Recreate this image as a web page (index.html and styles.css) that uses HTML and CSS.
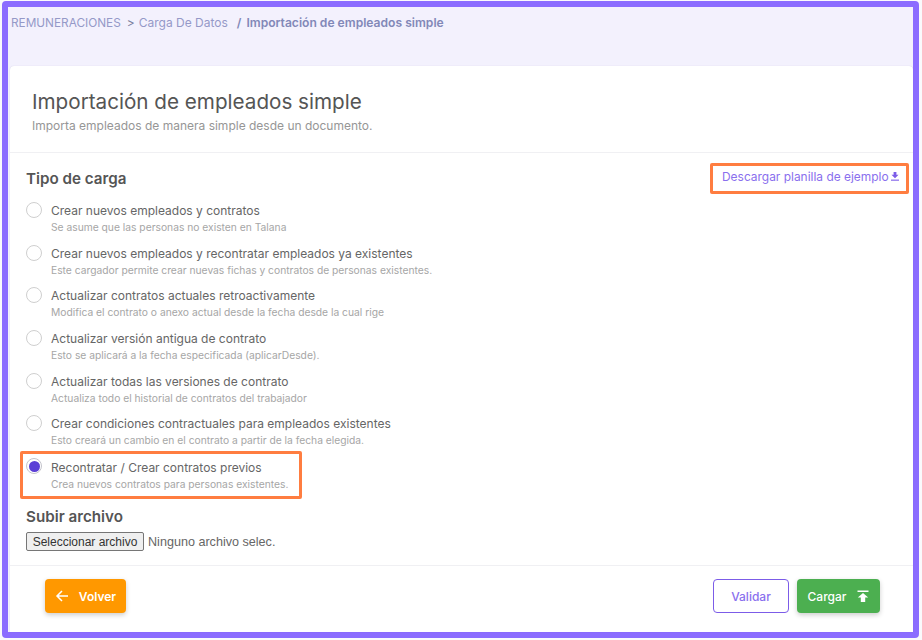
FILE: index.html
```html
<!DOCTYPE html>
<html lang="es">
<head>
    <meta charset="UTF-8">
    <title>Importación de empleados simple</title>
    <link rel="stylesheet" href="styles.css">
</head>
<body>
    <div class="frame">
        <div class="breadcrumb">
            <span class="root">REMUNERACIONES</span><span class="sep">&gt;</span><span>Carga De Datos</span><b class="current"><span class="slash">/</span>Importación de empleados simple</b>
        </div>

        <div class="card">
            <div class="card-header">
                <h1>Importación de empleados simple</h1>
                <p>Importa empleados de manera simple desde un documento.</p>
            </div>

            <div class="card-body">
                <div class="type-head">
                    <h2>Tipo de carga</h2>
                    <a href="#" class="download">Descargar planilla de ejemplo
                        <svg class="download-icon" width="8" height="9" viewBox="0 0 8 9"><path d="M2.6 0h2.8v2.8h2.1L4 6.2 0.5 2.8h2.1z" fill="#7c5ce8"/><rect x="0" y="7.6" width="8" height="1.1" fill="#7c5ce8"/></svg>
                    </a>
                </div>

                <div class="option">
                    <span class="radio"></span>
                    <div><div class="opt-title">Crear nuevos empleados y contratos</div><div class="opt-sub">Se asume que las personas no existen en Talana</div></div>
                </div>
                <div class="option">
                    <span class="radio"></span>
                    <div><div class="opt-title">Crear nuevos empleados y recontratar empleados ya existentes</div><div class="opt-sub">Este cargador permite crear nuevas fichas y contratos de personas existentes.</div></div>
                </div>
                <div class="option">
                    <span class="radio"></span>
                    <div><div class="opt-title">Actualizar contratos actuales retroactivamente</div><div class="opt-sub">Modifica el contrato o anexo actual desde la fecha desde la cual rige</div></div>
                </div>
                <div class="option">
                    <span class="radio"></span>
                    <div><div class="opt-title">Actualizar versión antigua de contrato</div><div class="opt-sub">Esto se aplicará a la fecha especificada (aplicarDesde).</div></div>
                </div>
                <div class="option">
                    <span class="radio"></span>
                    <div><div class="opt-title">Actualizar todas las versiones de contrato</div><div class="opt-sub">Actualiza todo el historial de contratos del trabajador</div></div>
                </div>
                <div class="option">
                    <span class="radio"></span>
                    <div><div class="opt-title">Crear condiciones contractuales para empleados existentes</div><div class="opt-sub">Esto creará un cambio en el contrato a partir de la fecha elegida.</div></div>
                </div>
                <div class="option selected">
                    <span class="radio checked"></span>
                    <div><div class="opt-title">Recontratar / Crear contratos previos</div><div class="opt-sub">Crea nuevos contratos para personas existentes.</div></div>
                </div>

                <h2 class="upload-title">Subir archivo</h2>
                <div class="file-row">
                    <button type="button" class="file-btn">Seleccionar archivo</button>
                    <span>Ninguno archivo selec.</span>
                </div>
            </div>

            <div class="card-footer">
                <button type="button" class="btn btn-back">
                    <svg width="14" height="14" viewBox="0 0 14 14"><path d="M13 7H2M7 2 2 7l5 5" fill="none" stroke="#fff" stroke-width="1.5"/></svg>
                    Volver
                </button>
                <div class="actions">
                    <button type="button" class="btn btn-validate">Validar</button>
                    <button type="button" class="btn btn-load">Cargar
                        <svg width="12" height="12" viewBox="0 0 12 12"><rect x="0.5" y="0.5" width="11" height="1.5" fill="#fff"/><path d="M6 3 11.2 7.6H8.2V12H3.8V7.6H0.8z" fill="#fff"/></svg>
                    </button>
                </div>
            </div>
        </div>
    </div>
</body>
</html>
```
FILE: styles.css
```css
* {
    box-sizing: border-box;
}

html, body {
    margin: 0;
    padding: 0;
    height: 640px;
    overflow: hidden;
}

body {
    background: #fafafc;
    font-family: Inter, Arial, sans-serif;
    color: #666;
    padding: 1px 3px 2px 2px;
}

.frame {
    height: 637px;
    border: 6px solid #8b6cff;
    border-radius: 4px;
    background: #f3f1fd;
    padding-left: 2px;
    display: flex;
    flex-direction: column;
}

.breadcrumb {
    height: 59px;
    padding: 8px 0 0 1px;
    font-size: 12px;
    line-height: 15px;
    color: #9599c8;
}

.breadcrumb .root {
    font-size: 11.8px;
}

.breadcrumb .sep {
    margin: 0 4px 0 6px;
    color: #7b7f9e;
}

.current {
    color: #8288b8;
    font-size: 12.1px;
    font-weight: 600;
    margin-left: 9px;
}

.current .slash {
    margin-right: 5px;
}

.card {
    flex: 1;
    background: #fff;
    border-radius: 4px 4px 0 0;
    box-shadow: 0 0 1px rgba(80, 70, 140, 0.25);
    display: flex;
    flex-direction: column;
}

.card-header {
    height: 87px;
    padding: 24px 22px 0;
    border-bottom: 1px solid #f0f0f3;
}

.card-header h1 {
    margin: 0;
    font-size: 20.65px;
    line-height: 24px;
    font-weight: 400;
    color: #555;
}

.card-header p {
    margin: 5px 0 0;
    font-size: 12px;
    line-height: 14px;
    color: #969696;
}

.card-body {
    flex: 1;
    padding: 0 4px 0 16px;
}

.type-head {
    display: flex;
    justify-content: space-between;
    align-items: flex-start;
    height: 48px;
    padding-top: 10px;
}

h2 {
    margin: 0;
    font-size: 15.2px;
    line-height: 32px;
    font-weight: 600;
    color: #555;
}

.download {
    display: block;
    width: 199px;
    height: 31px;
    border: 3px solid #ff7d40;
    border-radius: 2px;
    padding: 2px 0 0 9px;
    font-size: 11.95px;
    line-height: 17px;
    color: #8a70ee;
    text-decoration: none;
    white-space: nowrap;
}

.download-icon {
    margin-left: -1px;
}

.option {
    display: flex;
    gap: 9px;
    height: 42.7px;
}

.radio {
    flex: none;
    width: 16px;
    height: 16px;
    margin-top: 1px;
    border: 1.5px solid #cfcfcf;
    border-radius: 50%;
    background: #fff;
}

.radio.checked {
    border-color: #c4c4cc;
    padding: 1.5px;
    background: #5b3fd6 content-box;
}

.opt-title {
    font-size: 12px;
    line-height: 19px;
    color: #666;
    white-space: nowrap;
}

.opt-sub {
    font-size: 10.27px;
    line-height: 13px;
    margin-top: 1px;
    color: #a6a6a6;
    white-space: nowrap;
}

.option.selected {
    width: 282px;
    height: 48px;
    margin: -5.7px 0 0 -6px;
    padding: 4px 0 0 3px;
    border: 3px solid #ff7d40;
    border-radius: 2px;
}

.option.selected .radio {
    margin-top: 0;
}

.upload-title {
    line-height: 18px;
    margin-top: 9px;
}

.file-row {
    display: flex;
    align-items: center;
    gap: 4px;
    margin-top: 6px;
    font-family: "Liberation Sans", Arial, sans-serif;
    font-size: 12.6px;
    color: #666;
}

.file-btn {
    width: 118px;
    height: 19px;
    padding: 0;
    border: 1px solid #767676;
    border-radius: 2px;
    background: #efefef;
    font-family: "Liberation Sans", Arial, sans-serif;
    font-size: 12px;
    color: #333;
}

.card-footer {
    height: 67px;
    padding: 13px 33px 0 35px;
    border-top: 1px solid #f0f0f3;
    display: flex;
    justify-content: space-between;
    align-items: flex-start;
}

.actions {
    display: flex;
    gap: 8px;
}

.btn {
    height: 34px;
    border: none;
    border-radius: 4px;
    font-family: Inter, Arial, sans-serif;
    font-size: 12px;
    font-weight: 500;
    color: #fff;
    display: flex;
    align-items: center;
    justify-content: center;
    box-shadow: 0 2px 5px rgba(0, 0, 0, 0.2);
}

.btn-back {
    width: 81px;
    gap: 10px;
    background: #ff9800;
    font-weight: 600;
}

.btn-validate {
    width: 76px;
    background: #fff;
    border: 1px solid #7c5ce8;
    color: #8a70ee;
    box-shadow: none;
}

.btn-load {
    width: 83px;
    gap: 11px;
    background: #4caf50;
}
```
